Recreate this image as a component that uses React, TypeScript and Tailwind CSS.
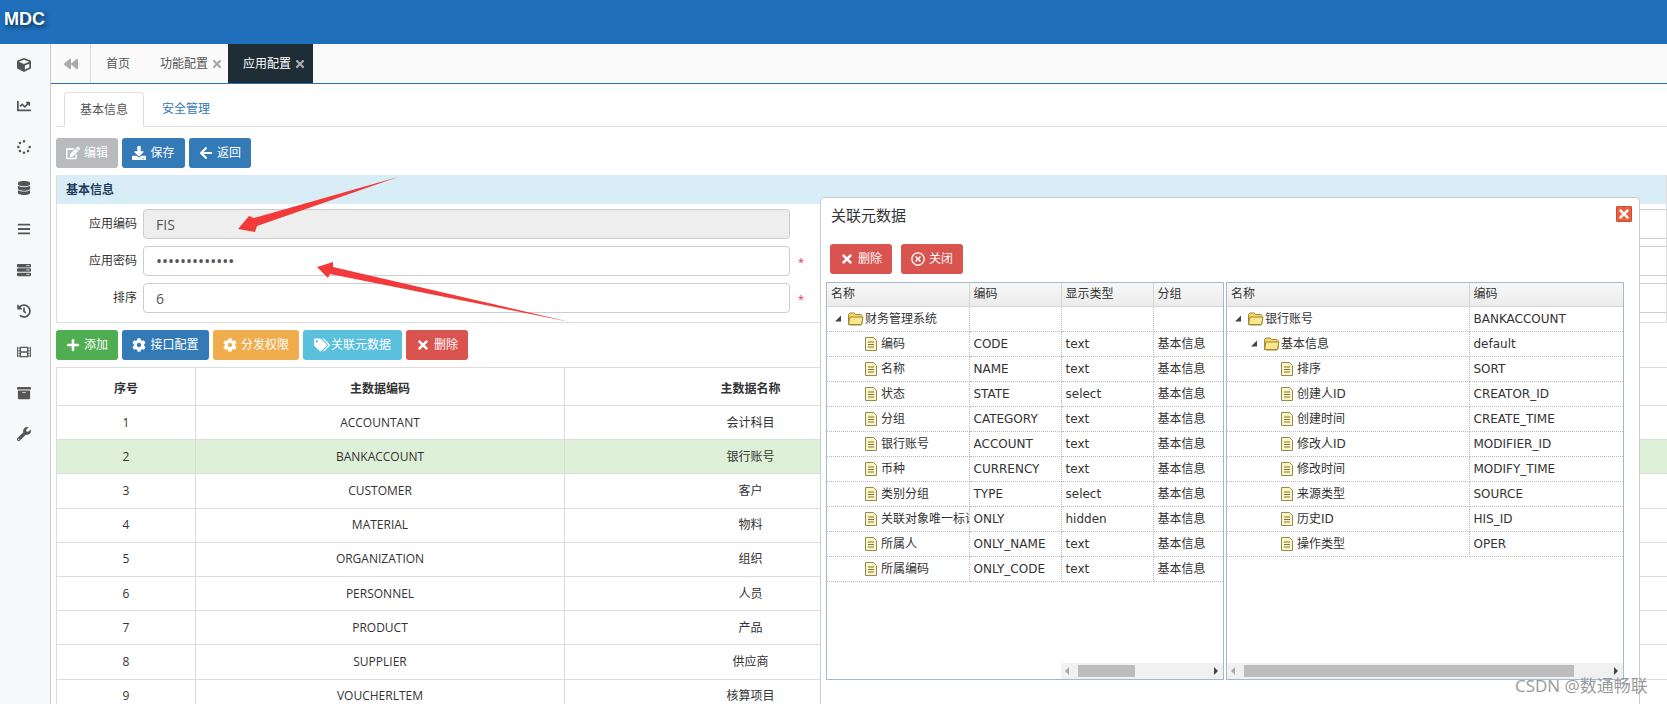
import type { ComponentType, ReactNode } from 'react'
import {
	FaArchive,
	FaArrowLeft,
	FaBackward,
	FaBars,
	FaChartLine,
	FaCog,
	FaCube,
	FaDatabase,
	FaDownload,
	FaEdit,
	FaFilm,
	FaHistory,
	FaPlus,
	FaRegTimesCircle,
	FaServer,
	FaSpinner,
	FaTags,
	FaTimes,
	FaWrench,
} from 'react-icons/fa'

const sans = "font-['Open_Sans','Noto_Sans_CJK_SC',sans-serif]"
const treeFont = "font-['DejaVu_Sans','Noto_Sans_CJK_SC',sans-serif]"

const navIcons = [FaCube, FaChartLine, FaSpinner, FaDatabase, FaBars, FaServer, FaHistory, FaFilm, FaArchive, FaWrench]

const masterRows = [
	['1', 'ACCOUNTANT', '会计科目'],
	['2', 'BANKACCOUNT', '银行账号'],
	['3', 'CUSTOMER', '客户'],
	['4', 'MATERIAL', '物料'],
	['5', 'ORGANIZATION', '组织'],
	['6', 'PERSONNEL', '人员'],
	['7', 'PRODUCT', '产品'],
	['8', 'SUPPLIER', '供应商'],
	['9', 'VOUCHERLTEM', '核算项目'],
]

type TreeRow = { name: string; level: number; folder?: boolean; cells: string[] }

const leftTree: TreeRow[] = [
	{ name: '财务管理系统', level: 0, folder: true, cells: ['', '', ''] },
	{ name: '编码', level: 1, cells: ['CODE', 'text', '基本信息'] },
	{ name: '名称', level: 1, cells: ['NAME', 'text', '基本信息'] },
	{ name: '状态', level: 1, cells: ['STATE', 'select', '基本信息'] },
	{ name: '分组', level: 1, cells: ['CATEGORY', 'text', '基本信息'] },
	{ name: '银行账号', level: 1, cells: ['ACCOUNT', 'text', '基本信息'] },
	{ name: '币种', level: 1, cells: ['CURRENCY', 'text', '基本信息'] },
	{ name: '类别分组', level: 1, cells: ['TYPE', 'select', '基本信息'] },
	{ name: '关联对象唯一标识', level: 1, cells: ['ONLY', 'hidden', '基本信息'] },
	{ name: '所属人', level: 1, cells: ['ONLY_NAME', 'text', '基本信息'] },
	{ name: '所属编码', level: 1, cells: ['ONLY_CODE', 'text', '基本信息'] },
]

const rightTree: TreeRow[] = [
	{ name: '银行账号', level: 0, folder: true, cells: ['BANKACCOUNT'] },
	{ name: '基本信息', level: 1, folder: true, cells: ['default'] },
	{ name: '排序', level: 2, cells: ['SORT'] },
	{ name: '创建人ID', level: 2, cells: ['CREATOR_ID'] },
	{ name: '创建时间', level: 2, cells: ['CREATE_TIME'] },
	{ name: '修改人ID', level: 2, cells: ['MODIFIER_ID'] },
	{ name: '修改时间', level: 2, cells: ['MODIFY_TIME'] },
	{ name: '来源类型', level: 2, cells: ['SOURCE'] },
	{ name: '历史ID', level: 2, cells: ['HIS_ID'] },
	{ name: '操作类型', level: 2, cells: ['OPER'] },
]

function Btn({
	icon: Icon,
	children,
	className,
	iconClass = 'size-3.5',
}: {
	icon: ComponentType<{ className?: string }>
	children: ReactNode
	className: string
	iconClass?: string
}) {
	return (
		<button
			type="button"
			className={`flex h-[30px] items-center justify-center gap-1 rounded-[3px] text-xs text-white ${className}`}
		>
			<Icon className={iconClass} />
			{children}
		</button>
	)
}

function FolderIcon() {
	return (
		<svg width="17" height="15" viewBox="0 0 17 15" className="shrink-0">
			<path d="M1.5 13V3.500L3 2h4l1.500 1.500H14l1 1V13l-1 1H2.500z" fill="#f3d568" stroke="#a08a34" />
			<path d="M1.500 13.500 3 6h13l-1.500 7.500z" fill="#fae68e" stroke="#a08a34" />
		</svg>
	)
}

function FileIcon() {
	return (
		<svg width="12" height="14" viewBox="0 0 12 14" className="shrink-0">
			<path d="M.5.5h8l3 3v10H.5z" fill="#fdf6c0" stroke="#8f8a58" />
			<path d="M3 5h6M3 7.500h6M3 10h6" stroke="#77744a" />
		</svg>
	)
}

function ExpandedArrow() {
	return (
		<svg width="16" height="7" viewBox="0 0 16 7" className="shrink-0">
			<path d="M4 6.500h6v-6z" fill="#444" />
		</svg>
	)
}

function TreeName({ row }: { row: TreeRow }) {
	return (
		<div className="flex h-full items-center overflow-hidden whitespace-nowrap" style={{ paddingLeft: 4 + row.level * 16 }}>
			{row.folder ? (
				<>
					<ExpandedArrow />
					<FolderIcon />
					<span className="ml-px">{row.name}</span>
				</>
			) : (
				<>
					<span className="w-[18px] shrink-0" />
					<FileIcon />
					<span className="ml-1">{row.name}</span>
				</>
			)}
		</div>
	)
}

function TreeGrid({
	columns,
	widths,
	rows,
	trackLeft,
	thumbLeft,
	thumbWidth,
}: {
	columns: string[]
	widths: number[]
	rows: TreeRow[]
	trackLeft: number
	thumbLeft: number
	thumbWidth: number
}) {
	return (
		<div className={`relative h-[398px] w-[398px] overflow-hidden border border-[#a4b9d0] text-xs text-[#333] ${treeFont}`}>
			<table className="w-full table-fixed border-collapse">
				<colgroup>
					{widths.map((w, i) => (
						<col key={i} style={{ width: w }} />
					))}
				</colgroup>
				<thead>
					<tr className="h-[23px] bg-gradient-to-b from-[#f7f7f7] to-[#ececec]">
						{columns.map((c, i) => (
							<th
								key={c}
								className={`border-b border-[#d5d5d5] pl-1 text-left font-normal ${i < columns.length - 1 ? 'border-r border-r-[#d5d5d5]' : ''}`}
							>
								{c}
							</th>
						))}
					</tr>
				</thead>
				<tbody>
					{rows.map((row) => (
						<tr key={row.name} className="h-[25px]">
							<td className="border-r border-b border-dotted border-[#bbb] p-0">
								<TreeName row={row} />
							</td>
							{row.cells.map((cell, i) => (
								<td
									key={i}
									className={`overflow-hidden border-b border-dotted border-[#bbb] pl-1 whitespace-nowrap ${i < row.cells.length - 1 ? 'border-r' : ''}`}
								>
									{cell}
								</td>
							))}
						</tr>
					))}
				</tbody>
			</table>
			<div className="absolute right-0 bottom-0 flex h-4 items-center bg-[#f1f1f1]" style={{ left: trackLeft }}>
				<span className="ml-1 size-0 border-y-4 border-r-4 border-y-transparent border-r-[#aaa]" />
				<span className="absolute inset-y-0.5 bg-[#bdbdbd]" style={{ left: thumbLeft, width: thumbWidth }} />
				<span className="absolute right-[5px] size-0 border-y-4 border-l-4 border-y-transparent border-l-[#444]" />
			</div>
		</div>
	)
}

function RelatedMetadataDialog() {
	return (
		<div className="absolute top-[197px] left-[820px] z-10 h-[520px] w-[820px] rounded-t-[4px] border border-[#ccc] bg-white">
			<div className={`pt-1.5 pl-2.5 text-[15px] leading-[22px] text-[#333] ${sans}`}>关联元数据</div>
			<div className="absolute top-2 right-[7px] flex size-4 items-center justify-center rounded-[1px] border border-[#c9502c] bg-[#e9603f] text-white">
				<FaTimes className="size-3.5" />
			</div>
			<div className={`mt-[18px] flex gap-[9px] pl-[9px] ${sans}`}>
				<Btn icon={FaTimes} className="w-[62px] bg-[#d9534f]">
					删除
				</Btn>
				<Btn icon={FaRegTimesCircle} className="w-[62px] bg-[#d9534f]">
					关闭
				</Btn>
			</div>
			<div className="mt-[8px] flex gap-0.5 pl-[5px]">
				<TreeGrid
					columns={['名称', '编码', '显示类型', '分组']}
					widths={[142, 92, 92, 70]}
					rows={leftTree}
					trackLeft={234}
					thumbLeft={17}
					thumbWidth={57}
				/>
				<TreeGrid
					columns={['名称', '编码']}
					widths={[242, 154]}
					rows={rightTree}
					trackLeft={0}
					thumbLeft={17}
					thumbWidth={330}
				/>
			</div>
		</div>
	)
}

function FormRow({ label, required, children }: { label: string; required?: boolean; children: ReactNode }) {
	return (
		<div className="flex h-[30px] items-center">
			<label className="w-[86px] shrink-0 pr-1.5 text-right text-xs text-[#333]">{label}</label>
			{children}
			<span className="ml-2 w-[90px] shrink-0 text-[11px] leading-none text-[#d9354f]">{required ? '*' : ''}</span>
			{/* second form column, mostly under the dialog */}
			<input readOnly className="h-[30px] w-[800px] shrink-0 rounded-[4px] border border-[#ccc] outline-none" />
		</div>
	)
}

const inputClass = 'h-[30px] w-[647px] shrink-0 rounded-[4px] border border-[#ccc] px-3 text-[#555] outline-none'

export default function App() {
	return (
		<div className={`relative h-[704px] w-[1667px] overflow-hidden bg-white ${sans}`}>
			<header className="flex h-[44px] items-start bg-[#1f6fba] pl-1">
				<span className="pt-[7px] font-['Liberation_Sans',sans-serif] text-lg leading-6 font-bold text-white [text-shadow:2px_2px_4px_#0a2a4a]">
					MDC
				</span>
			</header>

			<div className="flex h-[660px]">
				<aside className="flex w-[51px] shrink-0 flex-col items-center gap-[27px] border-r border-[#ccc] bg-[#f8f9fb] pt-[14px] pr-[3px] text-[#555]">
					{navIcons.map((Icon, i) => (
						<Icon key={i} className="size-3.5 shrink-0" />
					))}
				</aside>

				<main className="min-w-0 flex-1">
					<nav className="flex h-10 items-stretch border-b border-[#2a6fb0] bg-[#fafafa] text-xs text-[#555]">
						<span className="flex w-10 items-center justify-center border-r border-[#ddd] text-[#aaa]">
							<FaBackward className="size-3.5" />
						</span>
						<span className="flex w-[69px] items-center pl-[15px]">首页</span>
						<span className="flex w-[68px] items-center gap-[3px] whitespace-nowrap">
							功能配置
							<FaTimes className="size-3 shrink-0 text-[#aaa]" />
						</span>
						<span className="flex w-[85px] items-center gap-[3px] bg-[#1f2d36] pl-[15px] whitespace-nowrap text-white">
							应用配置
							<FaTimes className="size-3 shrink-0 text-[#aaa]" />
						</span>
					</nav>

					<div className="pl-[5px]">
						<div className="mt-2 flex h-[35px] items-stretch border-b border-[#ddd] pl-2 text-xs">
							<span className="-mb-px flex w-[80px] items-center justify-center rounded-t-[4px] border border-[#ddd] border-b-white bg-white text-[#555]">
								基本信息
							</span>
							<span className="flex items-center pl-[18px] text-[#337ab7]">安全管理</span>
						</div>

						<div className="mt-[11px] flex gap-1">
							<Btn icon={FaEdit} className="w-[62px] bg-[#b8babd]">
								编辑
							</Btn>
							<Btn icon={FaDownload} className="w-[63px] bg-[#337ab7]">
								保存
							</Btn>
							<Btn icon={FaArrowLeft} className="w-[62px] bg-[#337ab7]">
								返回
							</Btn>
						</div>

						<section className="mt-[7px] overflow-hidden border border-t-0 border-[#ddd]">
							<div className="flex h-[29px] items-center bg-[#d9edf7] pl-[9px] text-xs font-bold text-[#1d3c5c]">基本信息</div>
							<div className="flex flex-col gap-[7px] pt-[5px] pb-[9px]">
								<FormRow label="应用编码">
									<input readOnly value="FIS" className={`${inputClass} bg-[#eee] text-sm`} />
								</FormRow>
								<FormRow label="应用密码" required>
									<input readOnly type="password" value="1234567890123" className={`${inputClass} text-base`} />
								</FormRow>
								<FormRow label="排序" required>
									<input readOnly value="6" className={`${inputClass} text-sm`} />
								</FormRow>
							</div>
						</section>

						<div className="mt-[7px] flex gap-1">
							<Btn icon={FaPlus} className="w-[62px] bg-[#4fae52]">
								添加
							</Btn>
							<Btn icon={FaCog} className="w-[87px] bg-[#337ab7]">
								接口配置
							</Btn>
							<Btn icon={FaCog} className="w-[86px] bg-[#f0ad4e]">
								分发权限
							</Btn>
							<Btn icon={FaTags} iconClass="size-4 -mr-[3px]" className="w-[99px] bg-[#5bc0de]">
								关联元数据
							</Btn>
							<Btn icon={FaTimes} className="w-[62px] bg-[#d9534f]">
								删除
							</Btn>
						</div>

						<table className="mt-[7px] w-[1700px] table-fixed border-collapse text-center text-xs text-[#333]">
							<colgroup>
								<col className="w-[139px]" />
								<col className="w-[369px]" />
								<col className="w-[372px]" />
								<col />
							</colgroup>
							<thead>
								<tr className="h-[38px] font-bold">
									<th className="border border-[#ddd] pt-1">序号</th>
									<th className="border border-[#ddd] pt-1">主数据编码</th>
									<th className="border border-[#ddd] pt-1">主数据名称</th>
									<th className="border border-[#ddd]" />
								</tr>
							</thead>
							<tbody>
								{masterRows.map(([no, code, name]) => (
									<tr key={no} className={`h-[34.2px] ${no === '2' ? 'bg-[#dff0d8]' : ''}`}>
										<td className="border border-[#ddd]">{no}</td>
										<td className="border border-[#ddd]">{code}</td>
										<td className="border border-[#ddd]">{name}</td>
										<td className="border border-[#ddd]" />
									</tr>
								))}
							</tbody>
						</table>
					</div>
				</main>
			</div>

			<RelatedMetadataDialog />

			{/* screenshot annotations */}
			<svg className="pointer-events-none absolute top-0 left-0 z-20" width="1667" height="704">
				<path d="M238 229 249 216 254 218 398 177 257 226 255 232z" fill="#f23a3a" />
				<path d="M317 267 333 262 333 267 570 322 330 274 328 278z" fill="#f23a3a" />
			</svg>

			<div className={`absolute top-[673px] left-[1515px] z-30 text-[17px] text-[#9a9a9a] ${sans}`}>CSDN @数通畅联</div>
		</div>
	)
}
